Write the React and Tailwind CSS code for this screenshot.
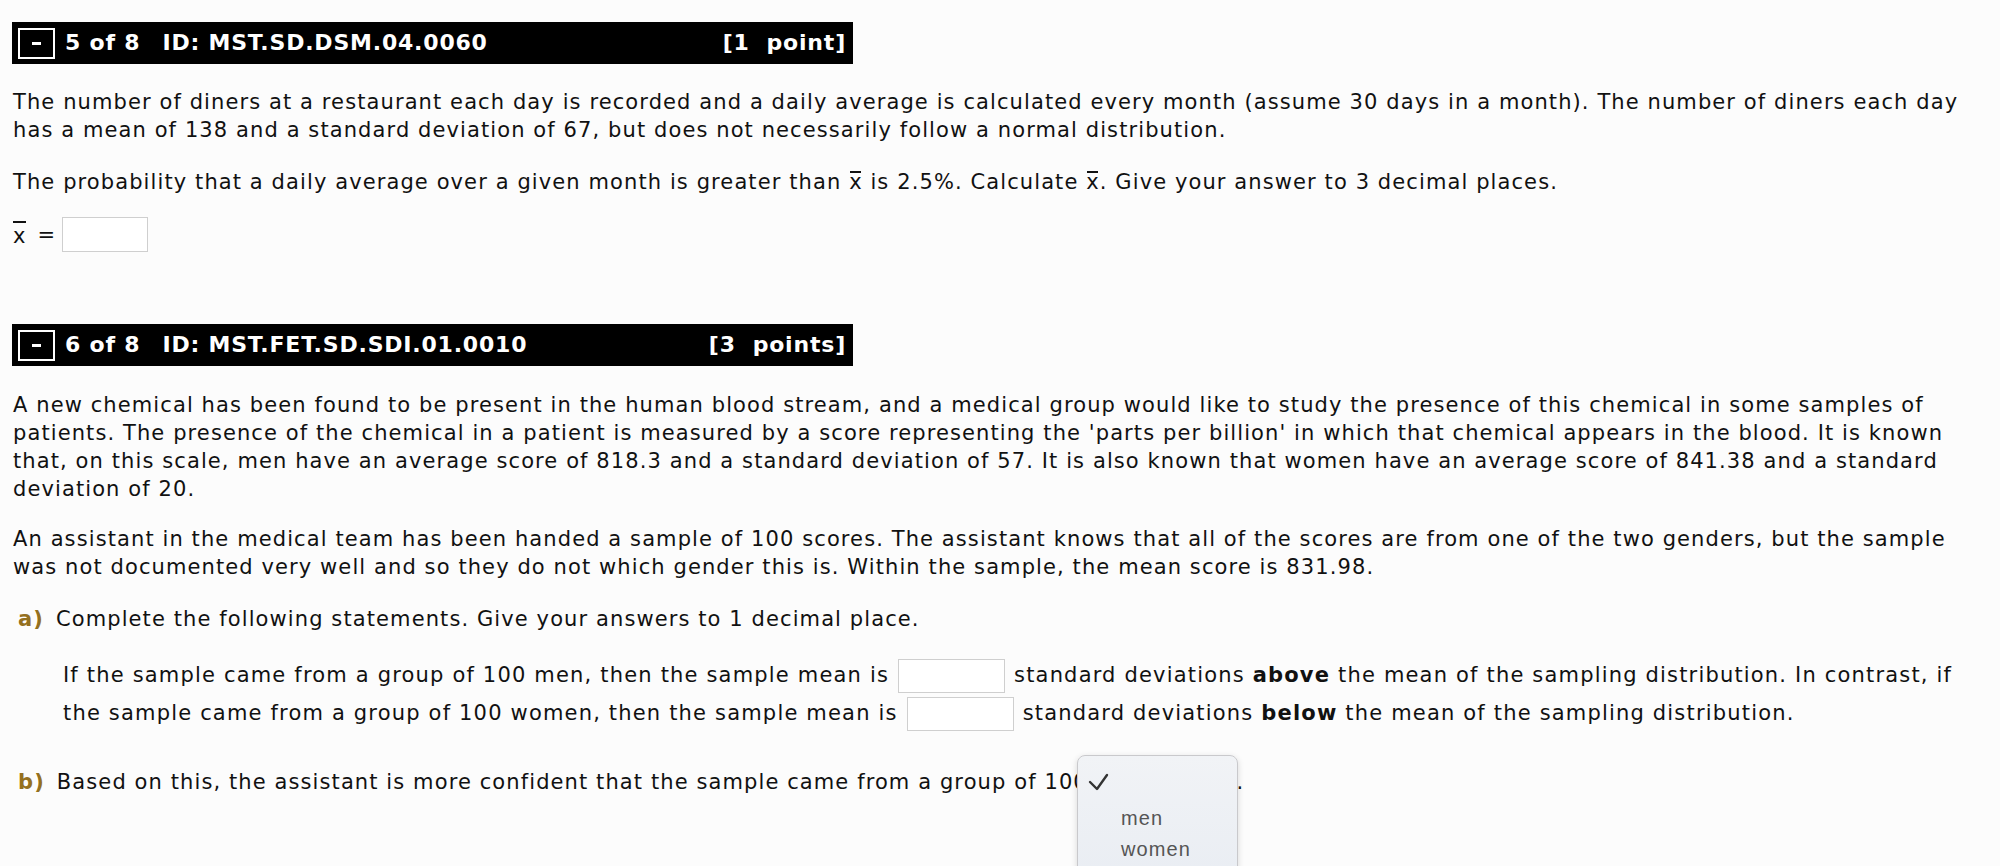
import React from "react";

function XBar({ top = "top-[3px]" }) {
  return (
    <span className="relative inline-block">
      x
      <span className={`absolute left-[1px] right-[2px] h-[2px] bg-[#111] ${top}`} />
    </span>
  );
}

function Header({ num, id, points }) {
  return (
    <div className="ml-[12px] w-[841px] h-[42px] bg-black text-white flex items-center pl-[6px] pr-[7px] font-bold text-[22px] leading-none tracking-[0.8px]">
      <span className="w-[37px] h-[31px] border-2 border-white flex items-center justify-center shrink-0">
        <span className="w-[9px] h-[3px] bg-white" />
      </span>
      <span className="ml-[10px] whitespace-pre">{num}</span>
      <span className="ml-[22px] whitespace-pre">{id}</span>
      <span className="ml-auto whitespace-pre">{points}</span>
    </div>
  );
}

function Box({ cls = "" }) {
  return (
    <span
      className={`inline-block w-[107px] h-[34px] border border-[#cfcfcf] bg-white align-middle ${cls}`}
    />
  );
}

export default function App() {
  return (
    <div
      className="w-[2000px] h-[866px] overflow-hidden bg-[#fcfcfc] text-[#111] text-[21px] leading-[28px] tracking-[1.1px] pt-[22px] relative"
      style={{ fontFamily: '"DejaVu Sans", Verdana, sans-serif' }}
    >
      {/* Question 5 */}
      <Header num="5 of 8" id="ID: MST.SD.DSM.04.0060" points="[1  point]" />
      <div className="px-[13px]">
        <p className="mt-[24px] whitespace-nowrap">
          The number of diners at a restaurant each day is recorded and a daily average is calculated every month (assume 30 days in a month). The number of diners each day
          <br />
          has a mean of 138 and a standard deviation of 67, but does not necessarily follow a normal distribution.
        </p>
        <p className="mt-[24px] whitespace-nowrap">
          The probability that a daily average over a given month is greater than <XBar /> is 2.5%. Calculate <XBar />. Give your answer to 3 decimal places.
        </p>
        <div className="mt-[20px] flex items-center h-[37px]">
          <span className="relative inline-block mt-[2px]">
            x
            <span className="absolute left-[0px] right-[1px] top-[-1px] h-[2px] bg-[#111]" />
          </span>
          <span className="ml-[11px]">=</span>
          <span className="ml-[6px] inline-block w-[86px] h-[35px] border border-[#cfcfcf] bg-white" />
        </div>
      </div>

      {/* Question 6 */}
      <div className="mt-[71px]">
        <Header num="6 of 8" id="ID: MST.FET.SD.SDI.01.0010" points="[3  points]" />
      </div>
      <div className="px-[13px]">
        <p className="mt-[25px] whitespace-nowrap">
          A new chemical has been found to be present in the human blood stream, and a medical group would like to study the presence of this chemical in some samples of
          <br />
          patients. The presence of the chemical in a patient is measured by a score representing the 'parts per billion' in which that chemical appears in the blood. It is known
          <br />
          that, on this scale, men have an average score of 818.3 and a standard deviation of 57. It is also known that women have an average score of 841.38 and a standard
          <br />
          deviation of 20.
        </p>
        <p className="mt-[22px] whitespace-nowrap">
          An assistant in the medical team has been handed a sample of 100 scores. The assistant knows that all of the scores are from one of the two genders, but the sample
          <br />
          was not documented very well and so they do not which gender this is. Within the sample, the mean score is 831.98.
        </p>
        <p className="mt-[24px] pl-[5px] whitespace-nowrap">
          <span className="font-bold text-[#94701f] mr-[12px]">a)</span>
          Complete the following statements. Give your answers to 1 decimal place.
        </p>
        <p className="mt-[23px] pl-[50px] leading-[38px] tracking-[1.18px] whitespace-nowrap">
          If the sample came from a group of 100 men, then the sample mean is
          <Box cls="mx-[9px]" />
          standard deviations <b>above</b> the mean of the sampling distribution. In contrast, if
          <br />
          the sample came from a group of 100 women, then the sample mean is
          <Box cls="mx-[9px]" />
          standard deviations <b>below</b> the mean of the sampling distribution.
        </p>
        <p className="mt-[33px] pl-[5px] leading-[34px] whitespace-nowrap">
          <span className="font-bold text-[#94701f] mr-[12px]">b)</span>
          Based on this, the assistant is more confident that the sample came from a group of 100{" "}
          <span className="inline-block w-[141px] h-[30px] border-2 border-[#1a73e8] rounded-[4px] bg-white align-middle" />
          .
        </p>
      </div>

      {/* Native select popup */}
      <div
        className="absolute left-[1077px] top-[755px] w-[161px] h-[130px] rounded-[8px] border border-[#c9c9cc] bg-gradient-to-b from-[#f1f3f6] to-[#e9edf3] shadow-[0_2px_6px_rgba(0,0,0,0.15)]"
        style={{ fontFamily: '"Liberation Sans", Arial, sans-serif' }}
      >
        <svg className="absolute left-[10px] top-[17px]" width="22" height="18" viewBox="0 0 22 18">
          <polyline points="2,9 9,16 19,2" fill="none" stroke="#333" strokeWidth="2.4" strokeLinecap="round" strokeLinejoin="round" />
        </svg>
        <div className="absolute left-[43px] top-[50px] text-[20px] leading-[24px] text-[#555]">men</div>
        <div className="absolute left-[43px] top-[81px] text-[20px] leading-[24px] text-[#555]">women</div>
      </div>
    </div>
  );
}
